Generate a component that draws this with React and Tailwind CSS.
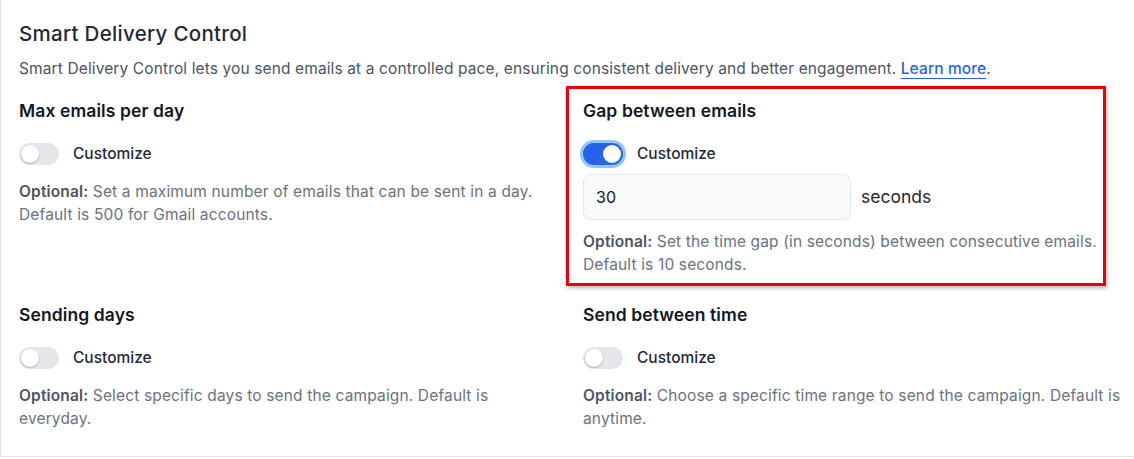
import React, { useState } from "react";

/* ------------------ Toggle ------------------ */
function Toggle({ on, onChange }) {
  return (
    <button
      type="button"
      onClick={() => onChange(!on)}
      className={
        on
          ? "relative w-10 h-[22px] rounded-full bg-[#2563eb] ring-[3px] ring-[#93c5fd] shrink-0"
          : "relative w-10 h-[22px] rounded-full bg-[#e5e7eb] shrink-0"
      }
    >
      <span
        className={
          on
            ? "absolute top-[2px] left-[20px] w-[18px] h-[18px] rounded-full bg-white"
            : "absolute top-[2px] left-[2px] w-[18px] h-[18px] rounded-full bg-white shadow-[0_1px_2px_rgba(0,0,0,0.25)]"
        }
      />
    </button>
  );
}

function Setting({ title, on, setOn, children, hint }) {
  return (
    <div>
      <h3 className="text-[17.5px] tracking-[0.1px] leading-[26px] font-semibold text-[#111827]">{title}</h3>
      <div className="mt-[19px] flex items-center gap-[14px]">
        <Toggle on={on} onChange={setOn} />
        <span className="text-[15.5px] leading-[22px] font-medium text-[#1f2937]">Customize</span>
      </div>
      {children}
      <p
        className={
          (children ? "mt-[10px]" : "mt-[15px]") +
          " text-[15.5px] tracking-[0.15px] leading-[23px] text-[#6b7280]"
        }
      >
        <span className="font-semibold text-[#4b5563]">Optional:</span> {hint}
      </p>
    </div>
  );
}

/* ------------------ Page ------------------ */
export default function App() {
  const [maxOn, setMaxOn] = useState(false);
  const [gapOn, setGapOn] = useState(true);
  const [daysOn, setDaysOn] = useState(false);
  const [timeOn, setTimeOn] = useState(false);
  const [gap, setGap] = useState("30");

  return (
    <div className="bg-white min-h-[459px] font-['Inter',sans-serif]">
      <section className="border-l border-b border-[#e5e7eb] pl-[18px] pr-[11px] pt-5 pb-[26px]">
        <h2 className="text-[20.5px] tracking-[0.3px] leading-7 font-medium text-[#1f2937]">
          Smart Delivery Control
        </h2>
        <p className="mt-[9px] text-[15.5px] tracking-[0.12px] leading-6 text-[#4b5563]">
          Smart Delivery Control lets you send emails at a controlled pace, ensuring consistent delivery and better
          engagement.{" "}
          <a href="#" className="text-[#2563eb] font-medium underline underline-offset-4 decoration-1">
            Learn more
          </a>
          .
        </p>

        <div className="mt-[17px] grid grid-cols-2 gap-x-6 gap-y-[26px]">
          <Setting
            title="Max emails per day"
            on={maxOn}
            setOn={setMaxOn}
            hint="Set a maximum number of emails that can be sent in a day. Default is 500 for Gmail accounts."
          />

          <div className="relative">
            {/* highlight annotation */}
            <div className="absolute -left-[17px] -top-[12px] right-[17px] -bottom-[10px] border-[3px] border-[#e8000b] shadow-[1px_2px_4px_rgba(0,0,0,0.3)] pointer-events-none" />
            <Setting
              title="Gap between emails"
              on={gapOn}
              setOn={setGapOn}
              hint="Set the time gap (in seconds) between consecutive emails. Default is 10 seconds."
            >
              <div className="mt-[9px] flex items-center gap-[10px]">
                <input
                  value={gap}
                  onChange={(e) => setGap(e.target.value)}
                  className="w-[268px] h-[46px] px-3 rounded-lg border border-[#e5e7eb] bg-[#f9fafb] text-[16px] text-[#111827] outline-none"
                />
                <span className="text-[17.5px] text-[#1f2937]">seconds</span>
              </div>
            </Setting>
          </div>

          <Setting
            title="Sending days"
            on={daysOn}
            setOn={setDaysOn}
            hint="Select specific days to send the campaign. Default is everyday."
          />
          <Setting
            title="Send between time"
            on={timeOn}
            setOn={setTimeOn}
            hint="Choose a specific time range to send the campaign. Default is anytime."
          />
        </div>
      </section>
    </div>
  );
}
